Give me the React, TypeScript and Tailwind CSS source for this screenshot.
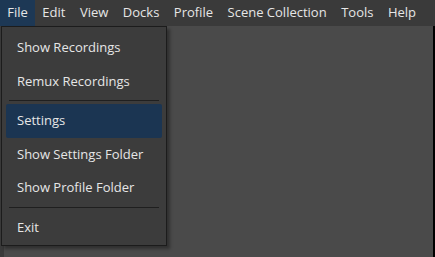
const menus = ["File", "Edit", "View", "Docks", "Profile", "Scene Collection", "Tools", "Help"];

type Item = { label: string; active?: boolean } | "sep";

const fileItems: Item[] = [
  { label: "Show Recordings" },
  { label: "Remux Recordings" },
  "sep",
  { label: "Settings", active: true },
  { label: "Show Settings Folder" },
  { label: "Show Profile Folder" },
  "sep",
  { label: "Exit" },
];

export default function App() {
  return (
    <div
      className="w-[435px] h-[257px] flex flex-col bg-[#4a4a4a] text-[13px] text-[#e6e6e6] overflow-hidden whitespace-nowrap"
      style={{ fontFamily: '"Open Sans", "Liberation Sans", sans-serif' }}
    >
      <div className="h-[26px] flex items-stretch bg-[#3a3a3a] shrink-0">
        {menus.map((m, i) => (
          <div
            key={m}
            className={`flex items-center px-[7.25px] ${i === 0 ? "bg-[#1d3855]" : ""}`}
          >
            {m}
          </div>
        ))}
      </div>
      <div className="relative flex-1 flex">
        <div className="w-[4px] bg-[#3a3a3a]" />
        <div className="flex-1" />
        <div className="w-[2px] bg-black" />

        <div className="absolute left-[1px] top-0 w-[166px] bg-[#3c3c3c] border border-[#1c1c1c] shadow-[3px_3px_3px_rgba(0,0,0,0.35)] pt-[4px] pb-[1px] px-[4px]">
          {fileItems.map((it, i) =>
            it === "sep" ? (
              <div key={i} className="h-px bg-[#1f1f1f] mx-[3px] mt-[2px] mb-[3px]" />
            ) : (
              <div
                key={i}
                className={`h-[33.5px] flex items-center pl-[11px] rounded-[2px] ${it.active ? "bg-[#1b3552]" : ""}`}
              >
                {it.label}
              </div>
            )
          )}
        </div>
      </div>
    </div>
  );
}
